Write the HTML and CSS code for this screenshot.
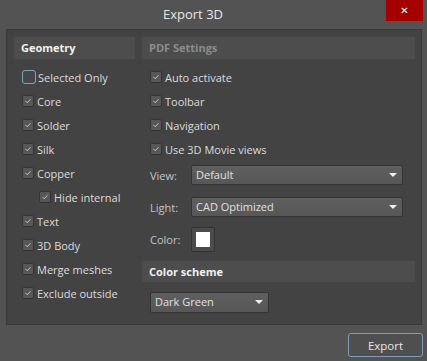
FILE: index.html
```html
<!DOCTYPE html>
<html lang="en">

<head>
    <meta charset="UTF-8" />
    <title>Export 3D</title>
    <link rel="stylesheet" href="styles.css">
</head>

<body>
    <div class="titlebar">
        <div class="title">Export 3D</div>
        <button class="close-btn">&#10005;</button>
    </div>

    <div class="panel">
        <div class="column left">
            <div class="section-head">Geometry</div>
            <label class="check"><span class="box empty"></span>Selected Only</label>
            <label class="check"><span class="box"><svg viewBox="0 0 12 12"><polyline points="3,6 5,8 9,4" /></svg></span>Core</label>
            <label class="check"><span class="box"><svg viewBox="0 0 12 12"><polyline points="3,6 5,8 9,4" /></svg></span>Solder</label>
            <label class="check"><span class="box"><svg viewBox="0 0 12 12"><polyline points="3,6 5,8 9,4" /></svg></span>Silk</label>
            <label class="check"><span class="box"><svg viewBox="0 0 12 12"><polyline points="3,6 5,8 9,4" /></svg></span>Copper</label>
            <label class="check sub"><span class="box"><svg viewBox="0 0 12 12"><polyline points="3,6 5,8 9,4" /></svg></span>Hide internal</label>
            <label class="check"><span class="box"><svg viewBox="0 0 12 12"><polyline points="3,6 5,8 9,4" /></svg></span>Text</label>
            <label class="check"><span class="box"><svg viewBox="0 0 12 12"><polyline points="3,6 5,8 9,4" /></svg></span>3D Body</label>
            <label class="check"><span class="box"><svg viewBox="0 0 12 12"><polyline points="3,6 5,8 9,4" /></svg></span>Merge meshes</label>
            <label class="check"><span class="box"><svg viewBox="0 0 12 12"><polyline points="3,6 5,8 9,4" /></svg></span>Exclude outside</label>
        </div>

        <div class="column right">
            <div class="section-head dim">PDF Settings</div>
            <label class="check"><span class="box"><svg viewBox="0 0 12 12"><polyline points="3,6 5,8 9,4" /></svg></span>Auto activate</label>
            <label class="check"><span class="box"><svg viewBox="0 0 12 12"><polyline points="3,6 5,8 9,4" /></svg></span>Toolbar</label>
            <label class="check"><span class="box"><svg viewBox="0 0 12 12"><polyline points="3,6 5,8 9,4" /></svg></span>Navigation</label>
            <label class="check"><span class="box"><svg viewBox="0 0 12 12"><polyline points="3,6 5,8 9,4" /></svg></span>Use 3D Movie views</label>

            <div class="field first">
                <span class="field-label">View:</span>
                <div class="dropdown wide">Default<span class="arrow"></span></div>
            </div>
            <div class="field">
                <span class="field-label">Light:</span>
                <div class="dropdown wide">CAD Optimized<span class="arrow"></span></div>
            </div>
            <div class="field color-field">
                <span class="field-label">Color:</span>
                <div class="swatch"><span class="swatch-fill"></span></div>
            </div>

            <div class="section-head scheme">Color scheme</div>
            <div class="dropdown scheme-select">Dark Green<span class="arrow"></span></div>
        </div>
    </div>

    <div class="footer">
        <button class="export-btn">Export</button>
    </div>
</body>

</html>
```

FILE: styles.css
```css
* {
    margin: 0;
    padding: 0;
    box-sizing: border-box;
}

body {
    background-color: #535353;
    font-family: 'Open Sans', 'Noto Sans', sans-serif;
    font-size: 11px;
    color: #dcdcdc;
    width: 427px;
    height: 361px;
    overflow: hidden;
}

/* Title bar */
.titlebar {
    display: flex;
    height: 29px;
}

.title {
    flex: 1;
    text-align: center;
    font-size: 13px;
    line-height: 28px;
    color: #e6e6e6;
}

.close-btn {
    width: 37px;
    height: 21px;
    margin-right: 4px;
    background-color: #a50000;
    border: none;
    color: #ffffff;
    font-size: 10px;
    font-weight: bold;
    font-family: 'DejaVu Sans', sans-serif;
}

/* Main panel */
.panel {
    display: flex;
    gap: 7px;
    height: 296px;
    margin: 0 5px 0 6px;
    padding: 7px 6px 0 7px;
    background-color: #434343;
    border: 1px solid #383838;
}

.column {
    display: flex;
    flex-direction: column;
}

.left {
    width: 121px;
}

.right {
    flex: 1;
}

.section-head {
    height: 22px;
    line-height: 22px;
    padding-left: 7px;
    margin-bottom: 6px;
    background-color: #4d4d4d;
    font-weight: bold;
    font-size: 11px;
    color: #f0f0f0;
}

.section-head.dim {
    color: #8c8c8c;
}

.check {
    display: flex;
    align-items: center;
    height: 24px;
    padding-left: 8px;
}

.check.sub {
    padding-left: 25px;
}

.box {
    display: flex;
    align-items: center;
    justify-content: center;
    width: 12px;
    height: 12px;
    margin-right: 3px;
    background-color: #575757;
    border: 1px solid #333333;
    border-radius: 2px;
}

.box.empty {
    width: 14px;
    height: 14px;
    margin-right: 2px;
    background-color: #464646;
    border-color: #7fa2c4;
    border-radius: 3px;
}

.box svg {
    width: 10px;
    height: 10px;
}

.box polyline {
    fill: none;
    stroke: #c8c8c8;
    stroke-width: 1.2;
}

/* Fields */
.field {
    display: flex;
    align-items: center;
    padding-left: 8px;
    margin-top: 12px;
}

.field.first {
    margin-top: 4px;
}

.color-field {
    margin-top: 10px;
}

.field-label {
    width: 41px;
    color: #c4c4c4;
}

.dropdown {
    position: relative;
    height: 20px;
    line-height: 18px;
    padding-left: 4px;
    background: linear-gradient(#5f5f5f, #575757);
    border: 1px solid #333333;
    border-radius: 2px;
    color: #e0e0e0;
}

.dropdown.wide {
    width: 212px;
}

.arrow {
    position: absolute;
    right: 5px;
    top: 7px;
    width: 0;
    height: 0;
    border-left: 4px solid transparent;
    border-right: 4px solid transparent;
    border-top: 4px solid #f0f0f0;
}

.swatch {
    width: 24px;
    height: 25px;
    padding: 4px;
    background-color: #4b4b4b;
    border: 1px solid #333333;
    border-radius: 2px;
}

.swatch-fill {
    display: block;
    width: 100%;
    height: 100%;
    background-color: #ffffff;
}

.section-head.scheme {
    height: 21px;
    line-height: 21px;
    margin-top: 9px;
    margin-bottom: 10px;
}

.scheme-select {
    width: 119px;
    height: 21px;
    margin-left: 8px;
}

/* Footer */
.footer {
    display: flex;
    justify-content: flex-end;
    padding: 8px 4px 0 0;
}

.export-btn {
    width: 75px;
    height: 24px;
    background-color: #4f4f4f;
    border: 1px solid #7e9dbd;
    border-radius: 3px;
    color: #e6e6e6;
    font-family: 'Open Sans', 'Noto Sans', sans-serif;
    font-size: 11.5px;
}
```
